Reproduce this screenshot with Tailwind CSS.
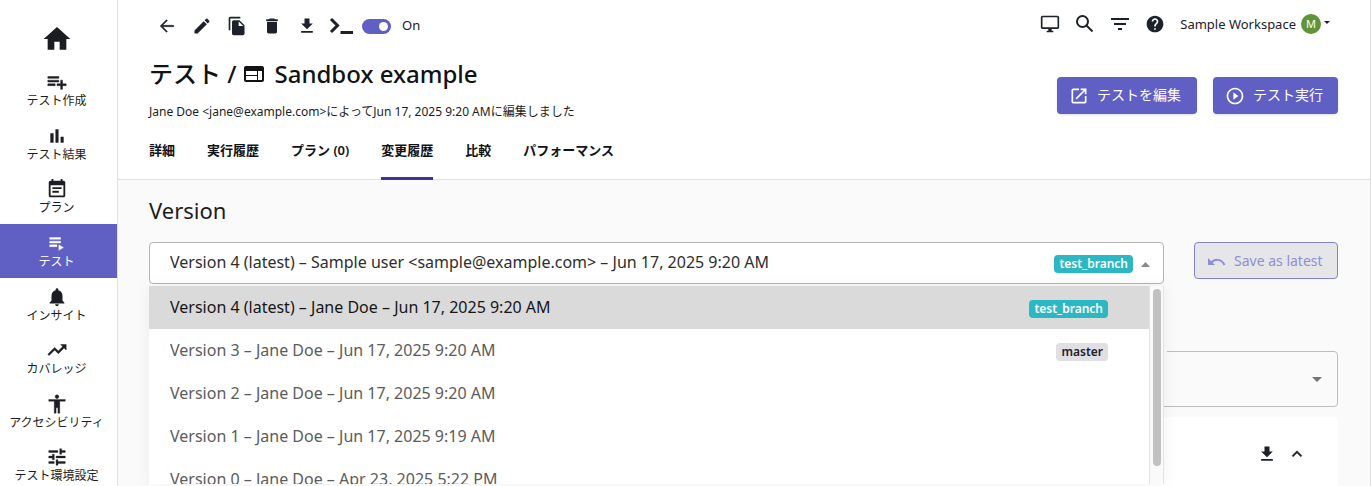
<!DOCTYPE html>
<html lang="ja">
<head>
    <meta charset="UTF-8">
    <meta name="viewport" content="width=device-width, initial-scale=1.0">
    <title>Sandbox example</title>
    <script src="https://cdn.jsdelivr.net/npm/@tailwindcss/browser@4"></script>
</head>
<body class="bg-[#fafafa] text-[#1c1d22] font-['Noto_Sans','Noto_Sans_CJK_JP',sans-serif]">

    <div class="h-screen flex overflow-hidden border-r border-[#e0e0e0]">

        <!-- Sidebar -->
        <nav id="sidebar" class="w-[118px] flex-shrink-0 bg-white border-r border-[#e0e0e0] text-xs">
            <a href="#" aria-label="Home" class="flex justify-center pt-[23px] pr-1 h-[63px]">
                <svg class="size-8 fill-current" viewBox="0 0 24 24"><path d="M10 20v-6h4v6h5v-8h3L12 3 2 12h3v8z"/></svg>
            </a>
            <ul class="h-[429px] flex flex-col">
                <li class="flex-1">
                    <a href="#" class="h-full flex flex-col items-center pt-2 pr-1">
                        <svg class="size-[22px] fill-current stroke-current" stroke-width=".5" viewBox="0 0 24 24"><path d="M14 10H2v2h12v-2zm0-4H2v2h12V6zm4 8v-4h-2v4h-4v2h4v4h2v-4h4v-2h-4zM2 16h8v-2H2v2z"/></svg>
                        <span class="leading-4">テスト作成</span>
                    </a>
                </li>
                <li class="flex-1">
                    <a href="#" class="h-full flex flex-col items-center pt-2 pr-1">
                        <svg class="size-[22px] fill-current stroke-current" stroke-width=".5" viewBox="0 0 24 24"><path d="M5 9.200h3V19H5zM10.600 5h2.800v14h-2.800zm5.600 8H19v6h-2.800z"/></svg>
                        <span class="leading-4">テスト結果</span>
                    </a>
                </li>
                <li class="flex-1">
                    <a href="#" class="h-full flex flex-col items-center pt-2 pr-1">
                        <svg class="size-[22px] fill-current" viewBox="0 0 24 24"><path d="M17 10H7v2h10v-2zm2-7h-1V1h-2v2H8V1H6v2H5c-1.110 0-1.990.9-1.990 2L3 19c0 1.100.89 2 2 2h14c1.100 0 2-.9 2-2V5c0-1.100-.9-2-2-2zm0 16H5V8h14v11zm-5-5H7v2h7v-2z"/></svg>
                        <span class="leading-4">プラン</span>
                    </a>
                </li>
                <li class="flex-1 bg-[#605fc4] text-white">
                    <a href="#" aria-current="page" class="h-full flex flex-col items-center pt-2 pr-1">
                        <svg class="size-[22px] fill-current stroke-current" stroke-width=".4" viewBox="0 0 24 24"><path d="M4 10h12v2H4zM4 6h12v2H4zM4 14h8v2H4zM14 14v6l5-3z"/></svg>
                        <span class="leading-4">テスト</span>
                    </a>
                </li>
                <li class="flex-1">
                    <a href="#" class="h-full flex flex-col items-center pt-2 pr-1">
                        <svg class="size-[22px] fill-current" viewBox="0 0 24 24"><path d="M12 22c1.100 0 2-.9 2-2h-4c0 1.100.89 2 2 2zm6-6v-5c0-3.070-1.640-5.640-4.500-6.320V4c0-.83-.67-1.500-1.500-1.500s-1.500.67-1.500 1.500v.68C7.630 5.360 6 7.920 6 11v5l-2 2v1h16v-1l-2-2z"/></svg>
                        <span class="leading-4">インサイト</span>
                    </a>
                </li>
                <li class="flex-1">
                    <a href="#" class="h-full flex flex-col items-center pt-2 pr-1">
                        <svg class="size-[22px] fill-current stroke-current" stroke-width=".5" viewBox="0 0 24 24"><path d="M16 6l2.290 2.290-4.880 4.880-4-4L2 16.590 3.410 18l6-6 4 4 6.300-6.290L22 12V6z"/></svg>
                        <span class="leading-4">カバレッジ</span>
                    </a>
                </li>
                <li class="flex-1">
                    <a href="#" class="h-full flex flex-col items-center pt-2 pr-1">
                        <svg class="size-[22px] fill-current stroke-current" stroke-width=".4" viewBox="0 0 24 24"><path d="M12 2c1.100 0 2 .9 2 2s-.9 2-2 2-2-.9-2-2 .9-2 2-2zm9 7h-6v13h-2v-6h-2v6H9V9H3V7h18v2z"/></svg>
                        <span class="leading-4">アクセシビリティ</span>
                    </a>
                </li>
                <li class="flex-1">
                    <a href="#" class="h-full flex flex-col items-center pt-2 pr-1">
                        <svg class="size-[22px] fill-current stroke-current" stroke-width=".4" viewBox="0 0 24 24"><path d="M3 17v2h6v-2H3zM3 5v2h10V5H3zm10 16v-2h8v-2h-8v-2h-2v6h2zM7 9v2H3v2h4v2h2V9H7zm14 4v-2H11v2h10zm-6-4h2V7h4V5h-4V3h-2v6z"/></svg>
                        <span class="leading-4">テスト環境設定</span>
                    </a>
                </li>
            </ul>
        </nav>

        <div class="flex-1 min-w-0 flex flex-col">

            <!-- Header -->
            <header class="flex-shrink-0 bg-white border-b border-[#e0e0e0] pl-[31px] pr-8">
                <div class="h-[50px] flex items-start justify-between">
                    <div id="toolbar" class="h-13 flex items-center gap-[15px] pl-2 text-[#1d2129]">
                        <button aria-label="Back"><svg class="size-5 fill-current stroke-current" stroke-width=".6" viewBox="0 0 24 24"><path d="M20 11.200H6.800l5.700-5.700L11.400 4.400 3.800 12l7.600 7.600 1.100-1.100-5.700-5.700H20z"/></svg></button>
                        <button aria-label="Edit"><svg class="size-5 fill-current" viewBox="0 0 24 24"><path d="M3 17.250V21h3.750L17.810 9.940l-3.750-3.750L3 17.250zM20.710 7.040c.39-.39.39-1.020 0-1.410l-2.340-2.340c-.39-.39-1.020-.39-1.410 0l-1.830 1.830 3.750 3.750 1.830-1.830z"/></svg></button>
                        <button aria-label="Copy"><svg class="size-5 fill-current" viewBox="0 0 24 24"><path d="M16 1H4c-1.100 0-2 .9-2 2v14h2V3h12V1zm-1 4l6 6v10c0 1.100-.9 2-2 2H7.990C6.890 23 6 22.100 6 21l.01-14c0-1.100.89-2 1.990-2h7zm-1 7h5.500L14 6.500V12z"/></svg></button>
                        <button aria-label="Delete"><svg class="size-5 fill-current" viewBox="0 0 24 24"><path d="M6 19c0 1.100.9 2 2 2h8c1.100 0 2-.9 2-2V7H6v12zM19 4h-3.500l-1-1h-5l-1 1H5v2h14V4z"/></svg></button>
                        <button aria-label="Download"><svg class="size-5 fill-current" viewBox="0 0 24 24"><path d="M19 9h-4V3H9v6H5l7 7 7-7zM5 18v2h14v-2H5z"/></svg></button>
                        <button aria-label="Command line" class="-ml-[3px]"><svg class="w-6 h-5" viewBox="0 0 24 20" fill="none" stroke="currentColor" stroke-width="3"><path d="M2 3l6.500 6.500L2 16M11.500 16.500H24"/></svg></button>
                        <label class="flex items-center gap-[11px] text-[13px] -ml-[6px]">
                            <input type="checkbox" checked class="peer sr-only">
                            <span class="w-[29px] h-[15px] rounded-full bg-[#605fc4] flex items-center justify-end px-[3px]"><span class="size-[9px] rounded-full bg-white"></span></span>
                            On
                        </label>
                    </div>
                    <div id="account" class="h-12 flex items-center gap-[15px] text-[#1d2129]">
                        <button aria-label="Desktop"><svg class="size-5 fill-current" viewBox="0 0 24 24"><path d="M21 2H3c-1.100 0-2 .9-2 2v12c0 1.100.9 2 2 2h7v2H8v2h8v-2h-2v-2h7c1.100 0 2-.9 2-2V4c0-1.100-.9-2-2-2zm0 14H3V4h18v12z"/></svg></button>
                        <button aria-label="Search"><svg class="size-5" viewBox="0 0 20 20" fill="none" stroke="currentColor" stroke-width="2"><circle cx="7.500" cy="7.500" r="5.500"/><path d="M11.500 11.500l6 6"/></svg></button>
                        <button aria-label="Filter"><svg class="size-5 fill-current" viewBox="0 0 20 20"><path d="M1 4h18v2H1zM4 9h12v2H4zM8 14h4v2H8z"/></svg></button>
                        <button aria-label="Help"><svg class="size-5 fill-current" viewBox="0 0 24 24"><path d="M12 2C6.480 2 2 6.480 2 12s4.480 10 10 10 10-4.480 10-10S17.520 2 12 2zm1 17h-2v-2h2v2zm2.070-7.750l-.9.92C13.450 12.900 13 13.500 13 15h-2v-.5c0-1.100.45-2.100 1.170-2.830l1.240-1.260c.37-.36.59-.86.59-1.410 0-1.100-.9-2-2-2s-2 .9-2 2H8c0-2.210 1.790-4 4-4s4 1.790 4 4c0 .88-.36 1.680-.93 2.250z"/></svg></button>
                        <button class="flex items-center text-[13px] leading-5 pr-2">
                            Sample Workspace
                            <span class="size-5 ml-[5px] rounded-full bg-[#5f9438] text-white text-[11px] flex items-center justify-center">M</span>
                            <svg class="w-[6px] h-[3px] ml-[3px] mb-1 fill-current" viewBox="0 0 6 3"><path d="M0 0h6L3 3z"/></svg>
                        </button>
                    </div>
                </div>

                <div class="h-[73px] flex justify-between">
                    <div>
                        <h1 class="h-12 flex items-center text-2xl font-medium text-[#111216]">
                            テスト /
                            <svg class="size-6 ml-[6px] mr-2 fill-current" viewBox="0 0 24 24"><path d="M20 4H4c-1.100 0-1.990.9-1.990 2L2 18c0 1.100.9 2 2 2h16c1.100 0 2-.9 2-2V6c0-1.100-.9-2-2-2zm-5 14H4v-4h11v4zm0-5H4V9h11v4zm5 5h-4V9h4v9z"/></svg>
                            Sandbox example
                        </h1>
                        <p class="text-xs leading-7">Jane Doe &lt;jane@example.com&gt;によってJun 17, 2025 9:20 AMに編集しました</p>
                    </div>
                    <div class="flex items-start gap-4 pt-[27px] text-sm text-white">
                        <button class="h-[37px] flex items-center gap-2 pl-3 pr-4 rounded bg-[#605fc4] shadow">
                            <svg class="size-5 fill-current" viewBox="0 0 24 24"><path d="M19 19H5V5h7V3H5c-1.110 0-2 .9-2 2v14c0 1.100.89 2 2 2h14c1.100 0 2-.9 2-2v-7h-2v7zM14 3v2h3.590l-9.830 9.830 1.410 1.410L19 6.410V10h2V3h-7z"/></svg>
                            <span class="-mt-[2px]">テストを編集</span>
                        </button>
                        <button class="h-[37px] flex items-center gap-2 pl-3 pr-[15px] rounded bg-[#605fc4] shadow">
                            <svg class="size-5 fill-current" viewBox="0 0 24 24"><path d="M10 16.500l6-4.500-6-4.500v9zM12 2C6.480 2 2 6.480 2 12s4.480 10 10 10 10-4.480 10-10S17.520 2 12 2zm0 18c-4.410 0-8-3.590-8-8s3.590-8 8-8 8 3.590 8 8-3.590 8-8 8z"/></svg>
                            <span class="-mt-[2px]">テスト実行</span>
                        </button>
                    </div>
                </div>

                <div id="tabs" class="h-[57px] -mb-px flex gap-8 text-[13px] font-semibold text-[#111216]">
                    <a href="#" class="pt-[17px] leading-5">詳細</a>
                    <a href="#" class="pt-[17px] leading-5">実行履歴</a>
                    <a href="#" class="pt-[17px] leading-5">プラン (0)</a>
                    <a href="#" aria-current="page" class="pt-[17px] leading-5 border-b-3 border-[#432fa6]">変更履歴</a>
                    <a href="#" class="pt-[17px] leading-5">比較</a>
                    <a href="#" class="pt-[17px] leading-5">パフォーマンス</a>
                </div>
            </header>

            <!-- Version history -->
            <main class="flex-1 min-h-0 pl-[31px] pr-8 pt-[14px]">
                <h2 class="text-[22px] leading-8 mb-4">Version</h2>

                <div class="flex items-start gap-[30px]">
                    <div class="relative z-10 flex-1 min-w-0">
                        <select aria-label="Version" class="block w-full h-[42px] pl-5 pb-[2px] appearance-none bg-white border border-[#b4b4b4] rounded text-base text-[#2e2e2e]">
                            <option>Version 4 (latest) – Sample user &lt;sample@example.com&gt; – Jun 17, 2025 9:20 AM</option>
                        </select>
                        <div class="absolute top-0 right-[14px] h-11 flex items-center gap-2 pointer-events-none">
                            <span class="h-[18px] px-[5px] rounded bg-[#2bb8c2] text-white text-xs leading-[17px] font-semibold">test_branch</span>
                            <svg class="w-[9px] h-[5px] fill-[#8a8a8a]" viewBox="0 0 9 5"><path d="M0 5h9L4.500 0z"/></svg>
                        </div>

                        <!-- Open menu -->
                        <div class="absolute top-11 inset-x-0 h-[198px] flex bg-white shadow-[0_0_16px_rgba(0,0,0,0.06)] overflow-hidden text-base text-[#5c5c5c]">
                            <ul role="listbox" aria-label="Versions" class="flex-1 min-w-0">
                                <li role="option" aria-selected="true" class="h-[43px] flex items-center justify-between pl-[21px] pr-[41px] pb-[2px] bg-[#dadada] text-[#161616]">
                                    Version 4 (latest) – Jane Doe – Jun 17, 2025 9:20 AM
                                    <span class="h-[18px] px-[5px] mt-1 rounded bg-[#2bb8c2] text-white text-xs leading-[17px] font-semibold">test_branch</span>
                                </li>
                                <li role="option" aria-selected="false" class="h-[43px] flex items-center justify-between pl-[21px] pr-[41px] pb-[2px]">
                                    Version 3 – Jane Doe – Jun 17, 2025 9:20 AM
                                    <span class="h-[18px] px-[5px] mt-1 rounded bg-[#dfdfe4] text-[#1d2129] text-xs leading-[17px] font-semibold">master</span>
                                </li>
                                <li role="option" aria-selected="false" class="h-[43px] flex items-center pl-[21px] pb-[2px]">Version 2 – Jane Doe – Jun 17, 2025 9:20 AM</li>
                                <li role="option" aria-selected="false" class="h-[43px] flex items-center pl-[21px] pb-[2px]">Version 1 – Jane Doe – Jun 17, 2025 9:19 AM</li>
                                <li role="option" aria-selected="false" class="h-[43px] flex items-center pl-[21px] pb-[2px]">Version 0 – Jane Doe – Apr 23, 2025 5:22 PM</li>
                            </ul>
                            <div class="w-[15px] bg-[#fafafa] border-x border-[#e4e4e4] pt-[3px] flex justify-center">
                                <div class="w-2 h-[177px] rounded-full bg-[#c1c1c1]"></div>
                            </div>
                        </div>
                    </div>
                    <button disabled class="w-36 h-[37px] flex items-center gap-[6px] pl-3 border border-[#8383d2] rounded bg-[#e6e6e9] text-sm text-[#8e8ed2] whitespace-nowrap">
                        <svg class="size-5" viewBox="0 0 20 20" fill="none" stroke="currentColor" stroke-width="2"><path d="M4 12c3.500-4.500 10.500-4.500 13.500 2"/><path d="M1 7v7h7z" fill="currentColor" stroke="none"/></svg>
                        <span class="ml-px">Save as latest</span>
                    </button>
                </div>

                <div class="relative mt-[67px]">
                    <select aria-label="Compare with" class="block w-full h-14 px-4 appearance-none border border-[#bdbdbd] rounded">
                        <option></option>
                    </select>
                    <span class="absolute top-0 left-3 right-[171px] h-px bg-[#fafafa]"></span>
                    <svg class="absolute right-4 top-[26px] w-[10px] h-[5px] fill-[#757575]" viewBox="0 0 10 5"><path d="M0 0h10L5 5z"/></svg>
                </div>

                <section class="mt-[10px] h-40 rounded bg-white flex justify-end items-start gap-[10px] pt-[27px] pr-[31px] text-[#1d2129]">
                    <button aria-label="Download"><svg class="size-5 fill-current" viewBox="0 0 24 24"><path d="M19 9h-4V3H9v6H5l7 7 7-7zM5 18v2h14v-2H5z"/></svg></button>
                    <button aria-label="Collapse"><svg class="size-5 fill-current stroke-current" stroke-width=".5" viewBox="0 0 24 24"><path d="M12 8l-6 6 1.410 1.410L12 10.830l4.590 4.580L18 14z"/></svg></button>
                </section>
            </main>
        </div>
    </div>

</body>
</html>
